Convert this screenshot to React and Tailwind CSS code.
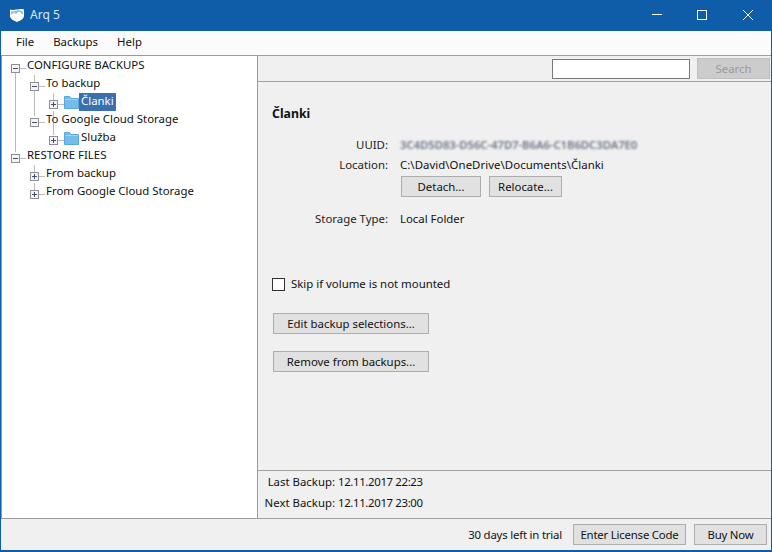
const font = '[font-family:"Open_Sans","Noto_Sans",sans-serif]';

function Box({ open }) {
  return (
    <svg width="9" height="9" viewBox="0 0 9 9" className="shrink-0">
      <rect x="0.5" y="0.5" width="8" height="8" fill="#f4f4f4" stroke="#8f8f8f" />
      <path d={open ? "M2 4.5H7" : "M2 4.5H7M4.5 2V7"} stroke="#3f4f6f" fill="none" />
    </svg>
  );
}

function Folder() {
  return (
    <svg width="15" height="13" viewBox="0 0 15 13" className="shrink-0 translate-y-px">
      <path d="M0.5 12.5V0.5H5.5L7 2.5H14.5V12.5Z" fill="#74bde8" stroke="#5aa7d8" />
      <path d="M1 3.5H14" stroke="#9ed2f0" />
    </svg>
  );
}

function Row({ depth, open, label, folder, selected }) {
  const pad = depth === 0 ? "pl-[9px]" : depth === 1 ? "pl-[28px]" : "pl-[47px]";
  return (
    <div className={`h-[18px] flex items-center ${pad}`}>
      <div className="translate-y-[3px] flex items-center">
        <Box open={open} />
      </div>
      <div className={depth === 2 ? "w-[6px]" : "w-[7px]"} />
      {folder && <Folder />}
      {folder ? (
        <span className={`translate-y-px px-[2px] h-[18px] leading-[15px] ${selected ? "bg-[#3a70b0] text-white" : "text-[#111]"}`}>
          {label}
        </span>
      ) : (
        <span className="text-[#111]">{label}</span>
      )}
    </div>
  );
}

function Btn({ className, children }) {
  return (
    <button className={`h-[21px] bg-[#e1e1e1] border border-[#adadad] text-[#111] leading-none ${className}`}>
      {children}
    </button>
  );
}

function TreeLines() {
  const d =
    "M15 72V152M20 68H25M34 75V83M34 90V116M39 86H44M53 93V100M53 111V134M58 104H63M58 140H63M39 122H44M20 158H25M34 165V172M39 176H44M34 183V190M39 194H44";
  return (
    <svg className="absolute left-0 top-0 pointer-events-none" width="80" height="210" viewBox="2 56 80 210">
      <path d={d} stroke="#777" strokeDasharray="1 1" fill="none" transform="translate(0.5 0.5)" />
    </svg>
  );
}

function Label({ children }) {
  return <div className="w-[130px] text-right text-[#222]">{children}</div>;
}

export default function App() {
  return (
    <div className={`w-[772px] h-[552px] flex flex-col overflow-hidden bg-[#0f5ca8] text-[11.4px] ${font}`}>
      <div className="h-[31px] shrink-0 flex items-center text-white">
        <svg width="14" height="14" viewBox="0 0 14 14" className="ml-[10px] -mt-[2px]">
          <path d="M0 1.500C4 3 9 0 14 1.500V8C14 11 9.500 13 7 14C4.500 13 0 11 0 8Z" fill="#fff" />
          <path d="M1 7L4 4.500L6 6L9 3.500L13 6.500V4L9 2L5 3L1 3.500Z" fill="#8fbbe0" />
        </svg>
        <span className="ml-[6px] -mt-[1px] text-[12px] text-[#dbe8f4]">Arq 5</span>
        <div className="flex-1" />
        <svg width="120" height="31" viewBox="652 0 120 31" fill="none" stroke="#fff">
          <path d="M652 14.500H662" />
          <rect x="697.500" y="10.500" width="9" height="9" />
          <path d="M743 10L753 20M753 10L743 20" />
        </svg>
      </div>

      <div className="flex-1 min-h-0 flex flex-col ml-px mr-px mb-[2px] bg-[#f0f0f0]">
        <div className="h-[24px] shrink-0 flex items-center bg-[#fbfbfb] text-[#111] pl-[15px] pb-[2px] gap-[19px]">
          <span>File</span>
          <span>Backups</span>
          <span>Help</span>
        </div>

        <div className="flex-1 min-h-0 flex">
          <div className="relative w-[257px] shrink-0 bg-white border border-[#9a9a9a]">
            <TreeLines />
            <Row depth={0} open label="CONFIGURE BACKUPS" />
            <Row depth={1} open label="To backup" />
            <Row depth={2} label="Članki" folder selected />
            <Row depth={1} open label="To Google Cloud Storage" />
            <Row depth={2} label="Služba" folder />
            <Row depth={0} open label="RESTORE FILES" />
            <Row depth={1} label="From backup" />
            <Row depth={1} label="From Google Cloud Storage" />
          </div>

          <div className="flex-1 min-w-0 flex flex-col">
            <div className="h-[27px] shrink-0 flex items-center justify-end border-t border-b border-[#a0a0a0] gap-[7px] pr-px">
              <div className="w-[138px] h-[20px] bg-white border border-[#7a7a7a]" />
              <div className="w-[73px] h-[21px] bg-[#cccccc] border border-[#bfbfbf] flex items-center justify-center text-[#9a9a9a]">
                Search
              </div>
            </div>

            <div className="flex-1 min-h-0 pl-[14px] pt-[23px] text-[#111]">
              <div className="font-bold text-[12.3px] leading-[18px]">Članki</div>
              <div className="mt-[12px] -ml-[14px] flex flex-col">
                <div className="flex h-[20px] items-center">
                  <Label>UUID:</Label>
                  <span className="ml-[12px] text-[#6d7687] blur-[0.8px] font-semibold tracking-[-0.1px] whitespace-nowrap">
                    3C4D5D83-D56C-47D7-B6A6-C1B6DC3DA7E0
                  </span>
                </div>
                <div className="flex h-[19px] items-center">
                  <Label>Location:</Label>
                  <span className="ml-[12px] tracking-[0.05px]">C:\David\OneDrive\Documents\Članki</span>
                </div>
                <div className="flex ml-[143px] gap-[8px] mt-[2px]">
                  <Btn className="w-[80px]">Detach...</Btn>
                  <Btn className="w-[73px]">Relocate...</Btn>
                </div>
                <div className="flex h-[19px] items-center mt-[12px]">
                  <Label>Storage Type:</Label>
                  <span className="ml-[12px]">Local Folder</span>
                </div>
              </div>

              <div className="mt-[47px] flex items-center gap-[6px] h-[18px]">
                <div className="w-[13px] h-[13px] bg-white border border-[#333]" />
                <span>Skip if volume is not mounted</span>
              </div>

              <Btn className="block w-[156px] mt-[20px] ml-px">Edit backup selections...</Btn>
              <Btn className="block w-[156px] mt-[17px] ml-px">Remove from backups...</Btn>
            </div>

            <div className="h-[49px] shrink-0 border-t border-b border-[#a0a0a0] flex flex-col justify-center pb-[5px] text-[#111]">
              <div className="grid grid-cols-[77px_1fr] gap-x-[3px] gap-y-[4px] leading-[17px]">
                <div className="text-right">Last Backup:</div>
                <div className="tracking-[-0.35px]">12.11.2017 22:23</div>
                <div className="text-right">Next Backup:</div>
                <div className="tracking-[-0.35px]">12.11.2017 23:00</div>
              </div>
            </div>
          </div>
        </div>

        <div className="h-[31px] shrink-0 flex items-center justify-end text-[#111] pr-[4px] tracking-[-0.2px]">
          <span className="mr-[11px]">30 days left in trial</span>
          <Btn className="w-[113px] mr-[8px]">Enter License Code</Btn>
          <Btn className="w-[73px]">Buy Now</Btn>
        </div>
      </div>
    </div>
  );
}
